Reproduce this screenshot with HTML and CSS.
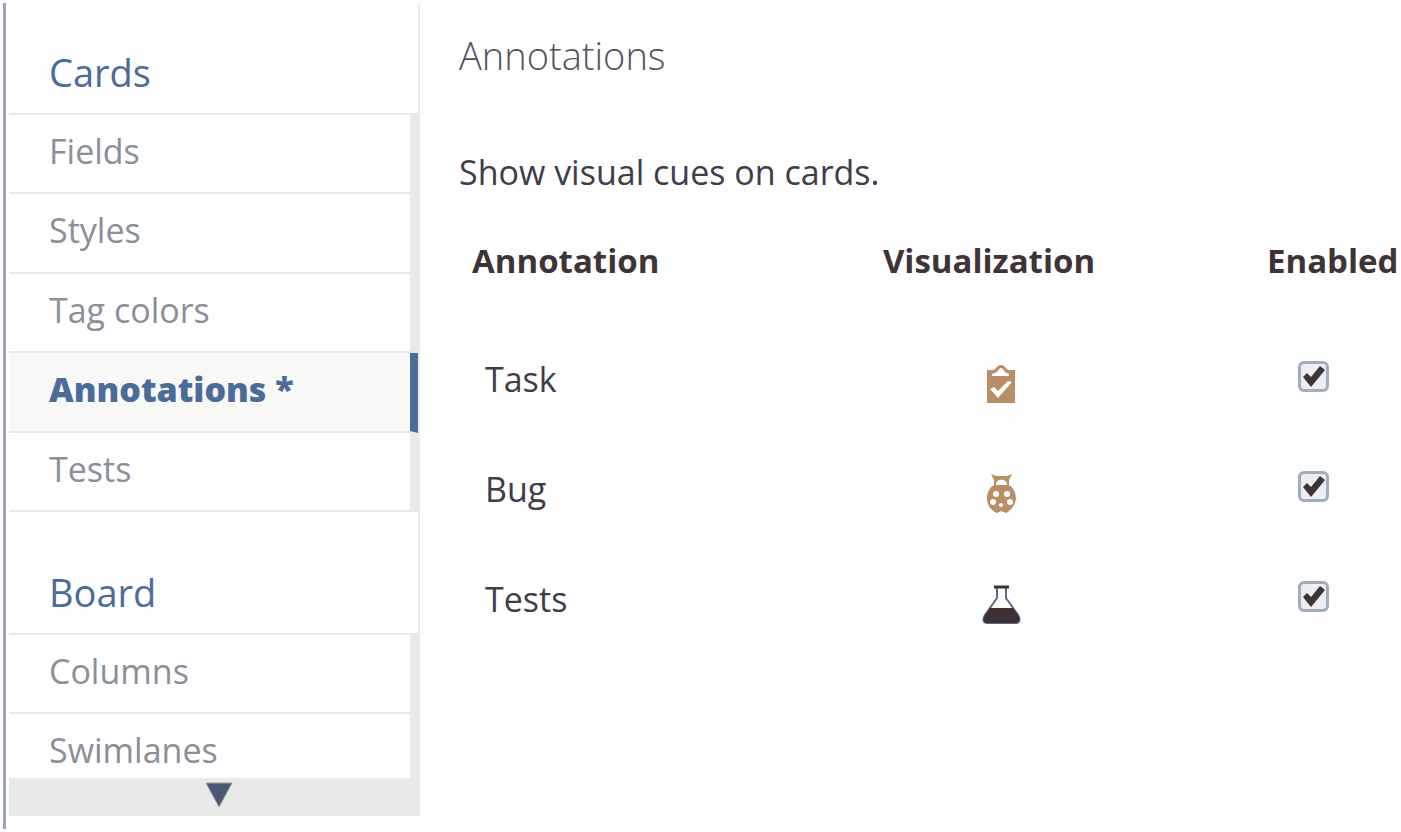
FILE: index.html
```html
<!DOCTYPE html>
<html lang="en">
<head>
<meta charset="utf-8">
<title>Annotations</title>
<link rel="stylesheet" href="styles.css">
</head>
<body>
<div class="settings">
  <nav class="sidebar">
    <section class="group">
      <h2 class="group-title">Cards</h2>
      <ul class="menu menu-cards">
        <li><a class="item" href="#">Fields</a></li>
        <li><a class="item" href="#">Styles</a></li>
        <li><a class="item" href="#">Tag colors</a></li>
        <li><a class="item selected" href="#" aria-current="page">Annotations *</a></li>
        <li><a class="item" href="#">Tests</a></li>
      </ul>
    </section>
    <section class="group">
      <h2 class="group-title">Board</h2>
      <ul class="menu menu-board">
        <li><a class="item" href="#">Columns</a></li>
        <li><a class="item last" href="#">Swimlanes</a></li>
      </ul>
    </section>
    <button class="more" type="button" aria-label="Scroll down">
      <svg width="28" height="26" viewBox="0 0 28 26"><path d="M1 1H27L14 25Z" fill="#4b5874" stroke="#a39a96" stroke-width="1"/></svg>
    </button>
  </nav>
  <main class="content">
    <h1 class="title">Annotations</h1>
    <p class="intro">Show visual cues on cards.</p>
    <table class="table">
      <thead>
        <tr><th class="name">Annotation</th><th class="visual">Visualization</th><th class="enabled">Enabled</th></tr>
      </thead>
      <tbody>
        <tr>
          <td class="name"><label for="task">Task</label></td>
          <td class="visual">
            <svg class="icon" width="40" height="42" viewBox="0 0 40 42">
              <path d="M6 8H13L17 4Q20 2 23 4L27 8H34V41H6Z" fill="#b98d66"/>
              <path d="M11 14V12L16 10L18 7Q20 5 22 7L24 10L28 12V14Z" fill="#fefefe"/>
              <path d="M9 27L13 25L17 29L27 19L31 20L17 36Z" fill="#fefefe"/>
            </svg>
          </td>
          <td class="enabled"><input class="check" type="checkbox" id="task" checked></td>
        </tr>
        <tr>
          <td class="name"><label for="bug">Bug</label></td>
          <td class="visual">
            <svg class="icon" width="40" height="42" viewBox="0 0 40 42">
              <path d="M10 2L15 4H26L31 2L28 8V13C33 16 35 21 35 27C34 34 29 39 25 41L20 39L16 41C11 39 6 34 6 27C6 21 8 16 13 13V8Z" fill="#b98d66"/>
              <path d="M15 13C14 6 27 6 26 13Z" fill="#fefefe"/>
              <g fill="#fefefe"><circle cx="15" cy="22" r="3"/><circle cx="26" cy="22" r="3"/><circle cx="12" cy="30" r="3"/><circle cx="29" cy="30" r="3"/><circle cx="20" cy="33" r="2"/></g>
            </svg>
          </td>
          <td class="enabled"><input class="check" type="checkbox" id="bug" checked></td>
        </tr>
        <tr>
          <td class="name"><label for="tests">Tests</label></td>
          <td class="visual">
            <svg class="icon" width="40" height="46" viewBox="0 0 40 46">
              <path d="M16 7V18L4 35C1 40 3 43 6 43H35C38 43 40 40 37 35L25 18V7" fill="none" stroke="#5a6a8a" stroke-width="2"/>
              <path d="M13 7H28" stroke="#3e3134" stroke-width="3"/>
              <path d="M9 28H32L37 35C40 40 38 43 35 43H6C3 43 1 40 4 35Z" fill="#3e3134"/>
            </svg>
          </td>
          <td class="enabled"><input class="check" type="checkbox" id="tests" checked></td>
        </tr>
      </tbody>
    </table>
  </main>
</div>
</body>
</html>
```
FILE: styles.css
```css
* { box-sizing: border-box; }

body {
  margin: 0;
  padding: 3px 0 3px 3px;
  background: #fefefe;
  color: #403c48;
  font-family: "Open Sans", "Noto Sans", sans-serif;
  font-size: 34px;
  line-height: 48px;
}

.settings {
  display: flex;
  min-height: 826px;
  border-left: 3px solid #9ca3b2;
}

.sidebar {
  flex: none;
  width: 414px;
  padding-left: 3px;
}

.group-title {
  height: 110px;
  margin: 0;
  padding: 45px 0 0 40px;
  border-right: 2px solid #ebecec;
  color: #4b6b98;
  font-size: 38px;
  font-weight: 400;
}

.group + .group .group-title {
  height: 121px;
  padding-top: 56px;
}

.menu {
  display: grid;
  grid-auto-rows: 1fr;
  margin: 0;
  padding: 0;
  border-top: 2px solid #e8eae9;
  list-style: none;
}

.menu-cards { min-height: 399px; }

.menu li { display: grid; border-right: 2px solid #ebecec; }

.item {
  padding: 12px 0 17px 40px;
  border-right: 8px solid #e8eae9;
  border-bottom: 2px solid #e8eae9;
  color: #8b8f99;
  text-decoration: none;
}

.item.selected {
  border-right-color: #4b6b98;
  background: #f8f8f7;
  color: #4b6b98;
  font-weight: 800;
}

.menu-board { grid-auto-rows: auto; }

.item.last { padding-bottom: 4px; border-bottom: 0; }

.more {
  display: flex;
  justify-content: center;
  width: 100%;
  height: 38px;
  padding: 4px 0 0 8px;
  border: 0;
  background: #e8eae9;
}

.content {
  flex: 1;
  padding: 28px 0 0 39px;
}

.title {
  margin: 0;
  color: #55525c;
  font-size: 38px;
  font-weight: 300;
}

.intro { margin: 69px 0 0; }

.table {
  width: 100%;
  margin-top: 41px;
  border-collapse: collapse;
  table-layout: fixed;
}

th {
  padding: 0 0 39px;
  color: #3e3438;
  font-size: 33px;
  font-weight: 700;
  text-align: left;
}

td { height: 110px; padding: 0; }

.name { width: 45%; padding-left: 26px; text-align: left; }

th.name { padding-left: 13px; }

.enabled { width: 134px; }

td.visual { padding-left: 98px; }

td.enabled { padding-left: 31px; }

.icon { display: block; margin-top: 8px; }

.check {
  display: block;
  width: 31px;
  height: 31px;
  margin: 0 0 6px;
  border: 3px solid #a3acba;
  border-radius: 6px;
  appearance: none;
  background: #edeeee url("data:image/svg+xml,%3Csvg xmlns='http://www.w3.org/2000/svg' viewBox='0 0 25 25'%3E%3Cpath d='M2 13L6 9L10 13L19 2L24 6L10 23Z' fill='%233e3338'/%3E%3C/svg%3E") center / 25px 25px no-repeat;
}
```
